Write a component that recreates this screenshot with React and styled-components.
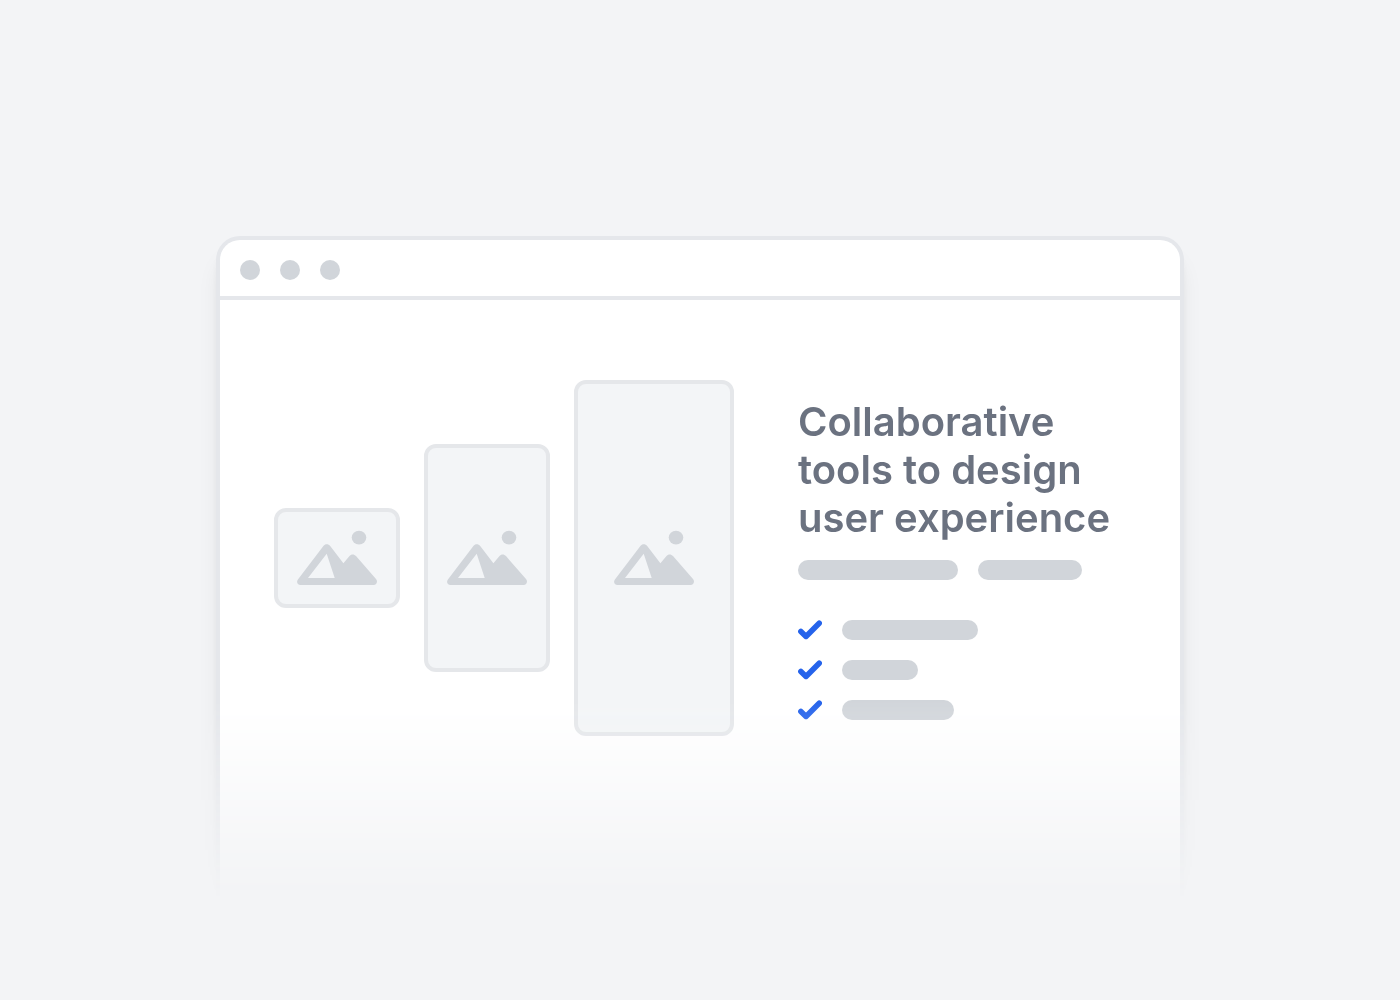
import React from "react";
import styled, { createGlobalStyle } from "styled-components";

const GlobalStyle = createGlobalStyle`
  *, *::before, *::after { box-sizing: border-box; }
  body {
    margin: 0;
    background: #f3f4f6;
    font-family: Inter, "Liberation Sans", sans-serif;
  }
`;

/* The scene fades into the page background towards its lower edge. */
const Scene = styled.main`
  display: flex;
  flex-direction: column;
  align-items: center;
  min-height: 100vh;
  padding: 236px 24px 0;
  overflow: hidden;
  mask-image: linear-gradient(to bottom, #000 70%, transparent 90%);
`;

const Window = styled.section`
  flex: 1;
  width: 100%;
  max-width: 968px;
  border: 4px solid #e5e7eb;
  border-bottom: 0;
  border-radius: 24px 24px 0 0;
  background: #fff;
  box-shadow:
    0 20px 24px -6px rgba(0, 0, 0, 0.1),
    0 8px 12px -4px rgba(0, 0, 0, 0.08);
`;

const TitleBar = styled.header`
  display: flex;
  gap: 20px;
  padding: 20px 20px 16px;
  border-bottom: 4px solid #e5e7eb;
`;

const Dot = styled.span`
  width: 20px;
  height: 20px;
  border-radius: 50%;
  background: #d1d5da;
`;

const Hero = styled.div`
  display: flex;
  flex-wrap: wrap;
  align-items: flex-end;
  justify-content: center;
  gap: 64px;
  padding: 80px 24px;
`;

const Gallery = styled.div`
  display: flex;
  align-items: center;
  gap: 24px;
`;

const Frame = styled.div`
  display: flex;
  align-items: center;
  justify-content: center;
  width: ${(p) => p.$width}px;
  height: ${(p) => p.$height}px;
  border: 4px solid #e5e7ea;
  border-radius: 12px;
  background: #f3f5f7;
`;

const Picture = styled.svg`
  display: block;
  width: 80px;
  height: 56px;
  fill: #d1d5da;
`;

const Copy = styled.div`
  display: flex;
  flex-direction: column;
  width: 328px;
  padding-bottom: 16px;
`;

const Title = styled.h1`
  margin: 0 0 18px;
  color: #6b7280;
  font-size: 40px;
  font-weight: 600;
  line-height: 48px;
`;

const Line = styled.div`
  display: flex;
  gap: 20px;
`;

const Bar = styled.span`
  width: ${(p) => p.$width}px;
  height: 20px;
  border-radius: 10px;
  background: #d1d5da;
`;

const Features = styled.ul`
  display: flex;
  flex-direction: column;
  gap: 20px;
  margin: 40px 0 0;
  padding: 0;
  list-style: none;
`;

const Feature = styled.li`
  display: flex;
  align-items: center;
  gap: 20px;
`;

const Tick = styled.svg`
  width: 24px;
  height: 20px;
  fill: none;
  stroke: #2563eb;
  stroke-width: 5.6;
  stroke-linecap: round;
  stroke-linejoin: round;
`;

const frames = [
  { width: 126, height: 100 },
  { width: 126, height: 228 },
  { width: 160, height: 356 },
];

const featureWidths = [136, 76, 112];

function PictureIcon() {
  return (
    <Picture viewBox="0 0 80 56" aria-hidden="true">
      <ellipse cx="62" cy="7.6" rx="7.3" ry="6.9" />
      <path
        fillRule="evenodd"
        d="M3.5 55C0.4 55 -0.9 51.7 0.9 49.4L26.4 16C28.1 13.7 31.4 13.7 33.2 16L46.4 33.2L52.3 26.2C54.2 23.9 57 23.9 59 26.1L79 49C81.1 51.4 79.7 55 76.5 55ZM29.7 23.7L11 48H37.7Z"
      />
    </Picture>
  );
}

export default function App() {
  return (
    <>
      <GlobalStyle />
      <Scene>
        <Window>
          <TitleBar>
            <Dot />
            <Dot />
            <Dot />
          </TitleBar>
          <Hero>
            <Gallery>
              {frames.map((frame) => (
                <Frame key={frame.height} $width={frame.width} $height={frame.height}>
                  <PictureIcon />
                </Frame>
              ))}
            </Gallery>
            <Copy>
              <Title>Collaborative tools to design user experience</Title>
              <Line>
                <Bar $width={160} />
                <Bar $width={104} />
              </Line>
              <Features>
                {featureWidths.map((width) => (
                  <Feature key={width}>
                    <Tick viewBox="0 0 24 20" aria-hidden="true">
                      <path d="M2.9 11.4L8 16.4L21.2 3.3" />
                    </Tick>
                    <Bar $width={width} />
                  </Feature>
                ))}
              </Features>
            </Copy>
          </Hero>
        </Window>
      </Scene>
    </>
  );
}
